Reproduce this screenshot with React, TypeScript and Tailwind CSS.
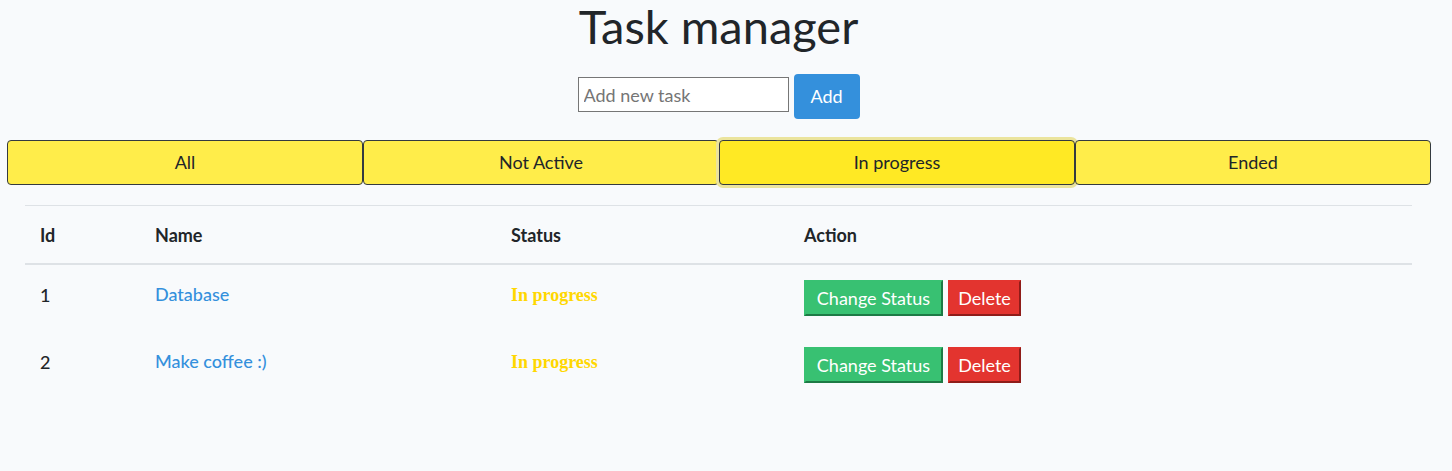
import React from "react";

const font = { fontFamily: "Lato, 'Noto Sans', sans-serif" };

export default function App() {
  const filters = ["All", "Not Active", "In progress", "Ended"];
  const rows = [
    { id: 1, name: "Database" },
    { id: 2, name: "Make coffee :)" },
  ];
  return (
    <div className="min-h-[471px] bg-[#f8fafc] text-[#212529]" style={font}>
      <div className="w-[1437px]">
        <h1 className="text-center text-[47px] leading-[52px] font-normal">Task manager</h1>
        <div className="mt-[22px] flex justify-center items-start gap-[5px]">
          <input
            placeholder="Add new task"
            className="mt-[3px] w-[211px] h-[35px] border border-[#767676] bg-white px-[5px] text-[18px] placeholder:text-[#757575] outline-none"
          />
          <button className="h-[45px] w-[66px] rounded-[4px] bg-[#3490dc] text-white text-[18px]">Add</button>
        </div>
        <div className="mt-[21px] ml-[7px] flex w-[1424px]">
          {filters.map((f, i) => (
            <button
              key={f}
              className={
                i === 2
                  ? "w-[356px] h-[45px] border border-[#343a40] rounded-[4px] bg-[#ffe924] text-[18px] shadow-[0_0_0_3px_#ebe49d]"
                  : "w-[356px] h-[45px] border border-[#343a40] rounded-[4px] bg-[#ffed4a] text-[18px]"
              }
            >
              {f}
            </button>
          ))}
        </div>
        <div className="mt-[20px] mx-[25px]">
          <div className="grid grid-cols-[130px_356px_293px_1fr] h-[60px] items-center border-t border-[#dee2e6] border-b-2 text-[18px] font-bold">
            <div className="pl-[15px] pt-[2px]">Id</div>
            <div className="pt-[2px]">Name</div>
            <div className="pt-[2px]">Status</div>
            <div className="pt-[2px]">Action</div>
          </div>
          {rows.map((r) => (
            <div key={r.id} className="grid grid-cols-[130px_356px_293px_1fr] h-[67px] items-start text-[18px]">
              <div className="pl-[15px] pt-[18px] leading-[24px] font-medium">{r.id}</div>
              <div className="pt-[17px] leading-[24px] font-medium text-[#3490dc]">{r.name}</div>
              <div
                className="pt-[18px] leading-[24px] font-bold text-[#ffd700]"
                style={{ fontFamily: "'Liberation Serif', serif" }}
              >
                In progress
              </div>
              <div className="pt-[15px] flex gap-[5px]">
                <button className="h-[36px] w-[139px] bg-[#38c172] text-white text-[18px] border-2 border-[#38c172] border-r-[#1d7a45] border-b-[#1d7a45]">
                  Change Status
                </button>
                <button className="h-[36px] w-[73px] bg-[#e3342f] text-white text-[18px] border-2 border-[#e3342f] border-r-[#8f1c19] border-b-[#8f1c19]">
                  Delete
                </button>
              </div>
            </div>
          ))}
        </div>
      </div>
    </div>
  );
}
